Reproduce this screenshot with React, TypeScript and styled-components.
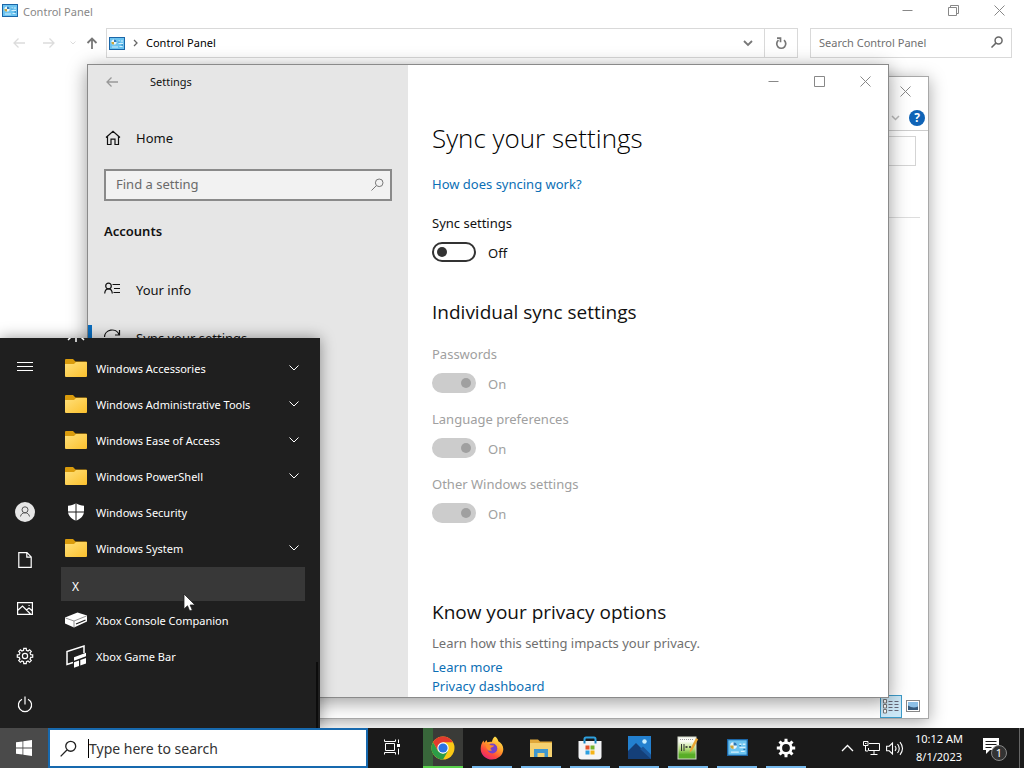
import React from "react";
import styled, { createGlobalStyle, css } from "styled-components";

const sans = `"Noto Sans", "Open Sans", "Segoe UI", sans-serif`;
const headingFont = `"Open Sans", "Noto Sans", "Segoe UI", sans-serif`;

const GlobalStyle = createGlobalStyle`
  *, *::before, *::after { box-sizing: border-box; }
  body { margin: 0; font-family: ${sans}; font-size: 13px; line-height: 20px; color: #111; }
  h1, h2, h3, p, ul { margin: 0; padding: 0; }
  ul { list-style: none; }
  button { margin: 0; padding: 0; border: 0; background: none; font: inherit; color: inherit; text-align: left; }
  a { color: inherit; text-decoration: none; }
  svg { display: block; flex: none; }
`;

/* ---------- desktop ---------- */

const Desktop = styled.div`
  display: flex;
  flex-direction: column;
  min-height: 100vh;
  overflow: hidden;
`;

const Workspace = styled.main`
  position: relative;
  flex: 1;
  background: #fff;
  overflow: hidden;
`;

const CaptionButtons = styled.div`
  display: flex;
  margin-left: auto;
`;

const CaptionButton = styled.button`
  display: grid;
  place-items: center;
  width: 46px;
  height: 100%;
  color: #888;
`;

/* ---------- control panel window ---------- */

const ControlTitleBar = styled.header`
  display: flex;
  align-items: center;
  gap: 5px;
  height: 20px;
  padding: 0 2px;
  font-size: 11px;
  color: #888;
`;

const TitleText = styled.span`
  line-height: 20px;
  padding-top: 4px;
`;

const AddressRow = styled.div`
  display: flex;
  align-items: center;
  height: 30px;
  margin: 8px 12px 0 8px;
`;

const HistoryButtons = styled.nav`
  display: flex;
  align-items: center;
  width: 98px;
  color: #dcdcdc;
`;

const HistoryButton = styled.button<{ $width: number; $tone?: string }>`
  display: grid;
  place-items: center;
  width: ${(p) => p.$width}px;
  height: 28px;
  color: ${(p) => p.$tone ?? "inherit"};
`;

const AddressBox = styled.div`
  display: flex;
  align-items: center;
  flex: 1;
  height: 30px;
  padding-left: 2px;
  border: 1px solid #d9d9d9;
  font-size: 11px;
  color: #000;
`;

const Crumb = styled.span`
  display: flex;
  align-items: center;
  gap: 8px;
  flex: 1;
`;

const CrumbArrow = styled.span`
  color: #666;
`;

const AddressButton = styled.button<{ $divided?: boolean }>`
  display: grid;
  place-items: center;
  width: 33px;
  height: 28px;
  color: #777;
  ${(p) => p.$divided && css`border-left: 1px solid #d9d9d9;`}
`;

const SearchBox = styled.label`
  display: flex;
  align-items: center;
  width: 202px;
  height: 30px;
  margin-left: 12px;
  padding: 0 8px 2px;
  border: 1px solid #d9d9d9;
  color: #666;
`;

const PlainInput = styled.input<{ $size: number; $tone: string }>`
  flex: 1;
  min-width: 0;
  height: 20px;
  padding: 0;
  border: 0;
  outline: 0;
  background: transparent;
  font-family: ${sans};
  font-size: ${(p) => p.$size}px;
  color: #111;
  &::placeholder { color: ${(p) => p.$tone}; opacity: 1; }
`;

/* ---------- background explorer window ---------- */

const ExplorerWindow = styled.section`
  position: absolute;
  inset: 76px 95px 9px 200px;
  display: flex;
  flex-direction: column;
  background: #fff;
  border: 1px solid #a8a8a8;
  box-shadow: 0 3px 16px rgba(0, 0, 0, 0.35);
`;

const ExplorerTitle = styled.header`
  display: flex;
  height: 28px;
`;

const ExplorerRibbon = styled.div`
  display: flex;
  align-items: center;
  justify-content: flex-end;
  gap: 9px;
  height: 26px;
  padding-right: 3px;
  border-bottom: 1px solid #ccc;
  color: #bbb;
`;

const HelpButton = styled.button`
  width: 16px;
  height: 16px;
  border-radius: 50%;
  background: #0f63b6;
  color: #fff;
  font-size: 12px;
  line-height: 16px;
  font-weight: 700;
  text-align: center;
`;

const ExplorerField = styled.div`
  height: 30px;
  margin: 5px 12px 0;
  border: 1px solid #d4d4d4;
`;

const ExplorerHeader = styled.div`
  height: 52px;
  margin: 0 8px;
  border-bottom: 1px solid #ddd;
`;

const ExplorerStatus = styled.footer`
  display: flex;
  align-items: center;
  justify-content: flex-end;
  height: 24px;
  margin-top: auto;
  padding-right: 4px;
`;

const ViewButton = styled.button<{ $selected?: boolean }>`
  display: grid;
  place-items: center;
  width: 22px;
  height: 23px;
  ${(p) => p.$selected && css`
    background: #cce8f7;
    border: 1px solid #3c9bc9;
  `}
`;

/* ---------- settings window ---------- */

const SettingsWindow = styled.section`
  position: absolute;
  inset: 64px 135px 30px 87px;
  display: flex;
  border: 1px solid #8a8a8a;
  background: #fff;
  box-shadow: 0 4px 18px rgba(0, 0, 0, 0.4);
  overflow: hidden;
`;

const NavPane = styled.aside`
  width: 320px;
  background: #e6e6e6;
`;

const NavTitleBar = styled.header`
  display: flex;
  align-items: center;
  height: 34px;
  padding-left: 17px;
  font-size: 11px;
`;

const BackButton = styled.button`
  display: grid;
  place-items: center;
  width: 14px;
  height: 28px;
  margin-right: 31px;
  color: #999;
`;

const NavLink = styled.a<{ $current?: boolean }>`
  display: flex;
  align-items: center;
  gap: 14px;
  height: 48px;
  padding-left: 16px;
  border-left: 0 solid #0a6cbd;
  ${(p) => p.$current && css`
    height: 26px;
    margin: 11px 0;
    padding-left: 12px;
    border-left-width: 4px;
  `}
`;

const NavTop = styled.div`
  padding-top: 15px;
`;

const FindBox = styled.label`
  display: flex;
  align-items: center;
  height: 32px;
  margin: 7px 16px 0;
  padding: 0 6px 2px 10px;
  border: 2px solid #8a8a8a;
  background: #f2f2f2;
  color: #777;
`;

const NavHeading = styled.h2`
  margin: 20px 16px 25px;
  font-size: 13px;
  font-weight: 600;
  line-height: 20px;
`;

const ContentPane = styled.div`
  flex: 1;
  min-width: 0;
`;

const ContentTitleBar = styled.header`
  display: flex;
  height: 33px;
`;

const ContentBody = styled.div`
  padding: 22px 24px 0;
`;

const PageTitle = styled.h1`
  font-family: ${headingFont};
  font-size: 26px;
  font-weight: 350;
  line-height: 36px;
  color: #000;
`;

const SectionTitle = styled.h2`
  margin: 36px 0 18px;
  font-family: ${headingFont};
  font-size: 19px;
  font-weight: 400;
  line-height: 28px;
  color: #111;
`;

const PrivacySection = styled.section`
  padding-top: 39px;
  ${SectionTitle} { margin-bottom: 7px; }
`;

const TextLink = styled.a`
  display: block;
  width: fit-content;
  line-height: 19px;
  color: #0c6fb5;
`;

const HelpLink = styled(TextLink)`
  margin: 19px 0;
`;

const Muted = styled.p`
  margin-bottom: 5px;
  color: #707070;
`;

const Setting = styled.div<{ $off?: boolean }>`
  display: flex;
  flex-direction: column;
  gap: 9px;
  color: ${(p) => (p.$off ? "#a0a0a0" : "#111")};
  & + & { margin-top: 16px; }
`;

const SwitchRow = styled.div`
  display: flex;
  gap: 12px;
  height: 20px;
  line-height: 22px;
`;

const Switch = styled.input`
  appearance: none;
  display: flex;
  align-items: center;
  width: 44px;
  height: 20px;
  margin: 0;
  padding: 0 3px;
  border: 2px solid #333;
  border-radius: 10px;
  background: #fff;
  &::before {
    content: "";
    width: 10px;
    height: 10px;
    border-radius: 50%;
    background: #333;
  }
  &:checked { justify-content: flex-end; }
  &:disabled { background: #ccc; border-color: #ccc; }
  &:disabled::before { background: #a0a0a0; }
`;

/* ---------- start menu ---------- */

const StartMenu = styled.aside`
  position: absolute;
  left: 0;
  bottom: 0;
  display: flex;
  width: 320px;
  height: 390px;
  background: #1f1f1f;
  color: #fff;
  box-shadow: 0 0 14px rgba(0, 0, 0, 0.4);
`;

const Rail = styled.nav`
  display: flex;
  flex-direction: column;
  width: 61px;
  padding-top: 5px;
`;

const RailButton = styled.button`
  display: grid;
  place-items: center;
  width: 50px;
  height: 48px;
  &:first-child { margin-bottom: auto; }
`;

const AppList = styled.ul`
  display: flex;
  flex-direction: column;
  justify-content: flex-end;
  width: 244px;
  height: 390px;
  padding-bottom: 54px;
  overflow: hidden;
  font-size: 11px;
`;

const AppItem = styled.button`
  display: flex;
  align-items: center;
  gap: 8px;
  width: 100%;
  height: 36px;
  padding: 0 6px 0 3px;
`;

const AppIcon = styled.span`
  display: grid;
  place-items: center;
  width: 24px;
  height: 24px;
`;

const AppName = styled.span`
  flex: 1;
  padding-top: 2px;
`;

const LetterHeader = styled.button`
  display: block;
  width: 100%;
  height: 34px;
  margin: 1px 0;
  padding: 5px 11px 0;
  background: #383838;
  font-size: 12px;
`;

const ScrollThumb = styled.span`
  align-self: flex-end;
  width: 2px;
  height: 66px;
  margin-left: 11px;
  background: #0c0c0c;
`;

const Pointer = styled.svg`
  position: absolute;
  left: 183px;
  bottom: 115px;
`;

/* ---------- taskbar ---------- */

const Taskbar = styled.footer`
  display: flex;
  height: 40px;
  background: #1a1a1a;
  color: #fff;
`;

const StartButton = styled.button`
  display: grid;
  place-items: center;
  width: 48px;
  background: #4a4a4a;
`;

const TaskSearch = styled.label`
  display: flex;
  align-items: center;
  width: 320px;
  padding-left: 10px;
  border: 2px solid #1769ae;
  background: #fff;
  color: #222;
`;

const Caret = styled.span`
  width: 1px;
  height: 19px;
  margin-left: 11px;
  background: #000;
`;

const TaskButton = styled.button<{ $line?: string; $active?: boolean }>`
  display: grid;
  place-items: center;
  width: 40px;
  padding-top: 1px;
  border-bottom: 2px solid ${(p) => p.$line ?? "transparent"};
  ${(p) => p.$active && css`background: linear-gradient(90deg, #38663a 10px, #3a3b38 10px);`}
`;

const TaskButtons = styled.nav`
  display: flex;
  gap: 9px;
  margin-left: 6px;
`;

const Tray = styled.div`
  display: flex;
  align-items: center;
  margin-left: auto;
`;

const TrayButton = styled.button`
  display: grid;
  place-items: center;
  width: 24px;
  height: 40px;
`;

const Clock = styled.button`
  width: 64px;
  font-size: 11px;
  line-height: 18px;
  text-align: center;
`;

const NoticeButton = styled(TrayButton)`
  width: 48px;
`;

const ShowDesktop = styled.button`
  width: 5px;
  height: 40px;
  border-left: 1px solid #666;
`;

/* ---------- drawings ---------- */

type StrokeProps = { w: number; h: number; d: string; sw?: number };
const Stroke = ({ w, h, d, sw = 1 }: StrokeProps) => (
  <svg width={w} height={h} viewBox={`0 0 ${w} ${h}`} fill="none" stroke="currentColor" strokeWidth={sw} aria-hidden="true">
    <path d={d} />
  </svg>
);

const MinimizeIcon = () => <Stroke w={11} h={11} d="M0.5 5.5h10" />;
const MaximizeIcon = () => <Stroke w={11} h={11} d="M0.5 0.5h10v10h-10z" />;
const RestoreIcon = () => <Stroke w={11} h={11} d="M0.5 2.5h8v8h-8zM2.5 2.5v-2h8v8h-2" />;
const CloseIcon = () => <Stroke w={11} h={11} d="M0.5 0.5l10 10M10.5 0.5l-10 10" />;
const ArrowLeft = () => <Stroke w={12} h={12} sw={1.3} d="M12 6H1M5.5 1.5L1 6l4.500 4.500" />;
const ArrowRight = () => <Stroke w={12} h={12} sw={1.3} d="M0 6h11M6.500 1.500L11 6l-4.500 4.500" />;
const SearchGlyph = ({ size = 13, sw = 1 }: { size?: number; sw?: number }) => (
  <svg width={size} height={size} viewBox="0 0 13 13" fill="none" stroke="currentColor" strokeWidth={sw} aria-hidden="true">
    <circle cx="8.200" cy="4.800" r="3.800" />
    <path d="M5.300 7.700L0.500 12.500" />
  </svg>
);

const PanelIcon = ({ w = 16, h = 13 }: { w?: number; h?: number }) => (
  <svg width={w} height={h} viewBox="0 0 16 13" aria-hidden="true">
    <rect x="0.500" y="0.500" width="15" height="12" fill="#6cc4f0" stroke="#1b66a8" />
    <circle cx="5" cy="5" r="2.600" fill="#e9f6fd" />
    <path d="M5 5V2.400A2.600 2.600 0 0 1 7.600 5z" fill="#2b78b8" />
    <path d="M5 5H2.400A2.600 2.600 0 0 0 5 7.600z" fill="#c9a53c" />
    <path d="M9.500 4h1.500M12 4h2M9.500 6.500h4.500M3 10h6M10.500 9.500h3" stroke="#d4f0fd" />
    <path d="M9.500 5h1M12.500 8h1.500" stroke="#1f6fae" />
  </svg>
);

const FolderIcon = () => (
  <svg width="24" height="20" viewBox="0 0 24 20" aria-hidden="true">
    <defs>
      <linearGradient id="folder" x1="0" y1="0" x2="1" y2="1">
        <stop offset="0" stopColor="#ffe07a" />
        <stop offset="1" stopColor="#fbc02d" />
      </linearGradient>
    </defs>
    <path d="M1 2q0-1 1-1h7l2.500 2.500H22q1 0 1 1V10H1z" fill="#d99b0c" />
    <path d="M1 6h9l2-2h10.500q.5 0 .5 1v13q0 1-1 1H2q-1 0-1-1z" fill="url(#folder)" />
  </svg>
);

const ShieldIcon = () => (
  <svg width="18" height="18" viewBox="0 0 18 18" aria-hidden="true">
    <path d="M9 0.300C6.500 2 3.800 2.700 1 2.700V8c0 4.600 3 7.800 8 9.800 5-2 8-5.200 8-9.800V2.700C14.200 2.700 11.500 2 9 0.300z" fill="#fff" />
    <path d="M9 0v18M0 9h18" stroke="#1f1f1f" strokeWidth="1" />
  </svg>
);

const SunIcon = () => (
  <svg width="20" height="20" viewBox="0 0 20 20" fill="none" stroke="#fff" strokeWidth="1.500" aria-hidden="true">
    <circle cx="10" cy="10" r="4" />
    <path d="M10 0v4M10 16v4M0 10h4M16 10h4M3 3l2.500 2.500M14.500 14.500L18 18M17 3l-2.500 2.500M5.500 14.500L2 18" />
  </svg>
);

const ConsoleIcon = () => (
  <svg width="24" height="18" viewBox="0 0 24 18" aria-hidden="true">
    <path d="M1 6.500L13.500 1.500l9.500 3v6L10 16.500 1 12.500z" fill="#fff" />
    <path d="M1.500 7L10 10l12.500-5M10 10v6" stroke="#777" strokeWidth="0.800" fill="none" />
    <path d="M12 13l9.500-4" stroke="#1f1f1f" strokeWidth="1.300" />
  </svg>
);

const GameBarIcon = () => (
  <svg width="22" height="24" viewBox="0 0 22 24" aria-hidden="true">
    <path d="M19 9V2L2 7.500v13l6-2" fill="none" stroke="#fff" strokeWidth="1.500" />
    <path d="M9 13.200L21 8.700v3.500L9 16.700zM9 18.300l5-1.800v5.500l-5 1.800zM15.300 15.900l5.700-2v5.500l-5.700 2z" fill="#fff" />
  </svg>
);

const HomeIcon = () => (
  <svg width="18" height="16" viewBox="0 0 18 16" fill="none" stroke="currentColor" strokeWidth="1.200" aria-hidden="true">
    <path d="M2 7.500L9 1.200l7 6.300M3.500 6.500v8h3.500V9.200h4V14.500h3.500v-8" />
  </svg>
);
const InfoIcon = () => (
  <svg width="18" height="18" viewBox="0 0 18 18" fill="none" stroke="currentColor" strokeWidth="1.200" aria-hidden="true">
    <circle cx="4.500" cy="5" r="2.800" />
    <path d="M0.700 12.500C0.900 9.500 2.500 7.800 4.500 7.800s3.600 1.700 3.800 4.700M8.500 3.500h7.500M10 7.500h6M9.500 11.500h6.500" />
  </svg>
);
const SyncIcon = () => <Stroke w={18} h={18} sw={1.200} d="M0.500 8A7.500 7 0 0 1 15 5.500M15.500 1V6H11M15.500 9.500A7.500 7.500 0 0 1 1.500 11M1 16V11.500H5.500" />;

const HamburgerIcon = () => <Stroke w={16} h={12} d="M0 1.500h16M0 5.500h16M0 9.500h16" />;
const UserIcon = () => (
  <svg width="20" height="20" viewBox="0 0 20 20" aria-hidden="true">
    <circle cx="10" cy="10" r="10" fill="#e6e6e6" />
    <g fill="none" stroke="#555"><circle cx="10" cy="7.800" r="3" /><path d="M5.500 14.500c.5-2.500 2.200-3.700 4.500-3.700s4 1.200 4.500 3.700" /></g>
  </svg>
);
const DocumentIcon = () => <Stroke w={14} h={16} sw={1.200} d="M0.800 0.700H9l4.200 4.200v10.400H0.800zM8.800 0.800V5.200h4.200" />;
const PictureIcon = () => (
  <svg width="16" height="13" viewBox="0 0 16 13" fill="none" stroke="currentColor" strokeWidth="1.200" aria-hidden="true">
    <path d="M0.600 0.600h14.800v11.800H0.600zM0.600 8.500L5.500 4l8 8M9.500 8l2.500-2 3.400 3" />
    <path d="M11.500 3.500h1.200" />
  </svg>
);

const gearPath = (n: number, c: number, outer: number, inner: number) => {
  const pts: string[] = [];
  for (let i = 0; i < n; i++) {
    const a = (i * 2 * Math.PI) / n;
    const s = Math.PI / n;
    [[-0.62, inner], [-0.4, outer], [0.4, outer], [0.62, inner]].forEach(([o, r]) => {
      pts.push(`${(c + r * Math.sin(a + o * s)).toFixed(2)} ${(c - r * Math.cos(a + o * s)).toFixed(2)}`);
    });
  }
  return `M${pts.join("L")}Z`;
};

const GearIcon = () => (
  <svg width="18" height="18" viewBox="0 0 18 18" fill="none" stroke="currentColor" strokeWidth="1.200" aria-hidden="true">
    <path d={gearPath(8, 9, 7.8, 5.9)} />
    <circle cx="9" cy="9" r="2.600" />
  </svg>
);
const GearSolid = () => (
  <svg width="20" height="20" viewBox="0 0 20 20" aria-hidden="true">
    <path d={gearPath(8, 10, 9.3, 6.6)} fill="#fff" />
    <circle cx="10" cy="10" r="3.900" fill="#1a1a1a" />
  </svg>
);
const PowerIcon = () => <Stroke w={16} h={17} sw={1.200} d="M8 0.500v8M5 3.200a6.600 6.600 0 1 0 6 0" />;

const WindowsLogo = () => (
  <svg width="16" height="16" viewBox="0 0 16 16" fill="#fff" aria-hidden="true">
    <path d="M0 2.300l6.500-.9v6.200H0zM7.300 1.300L16 0v7.600H7.300zM0 8.400h6.500v6.200L0 13.700zM7.300 8.400H16V16l-8.700-1.300z" />
  </svg>
);

const TaskViewIcon = () => (
  <svg width="20" height="17" viewBox="0 0 20 17" fill="none" stroke="#fff" aria-hidden="true">
    <path d="M1.500 4.500h9v7h-9zM0.500 0.500v2h11v-2M0.500 15.500v-2h11v2" />
    <path d="M14.500 0.500v3.500M14.500 9.500v6" />
    <rect x="13" y="5" width="3" height="3" fill="#fff" stroke="none" />
  </svg>
);

const ChromeIcon = () => (
  <svg width="24" height="24" viewBox="0 0 24 24" aria-hidden="true">
    <circle cx="12" cy="12" r="11.500" fill="#fbc916" />
    <path d="M2.040 6.250A11.500 11.500 0 0 1 21.960 6.250H12L7 15z" fill="#e33b2e" />
    <path d="M2.040 6.250L7 14.900 12 17.800 17 14.900 12 23.500A11.500 11.500 0 0 1 2.040 6.250z" fill="#2c9c48" />
    <circle cx="12" cy="12" r="5.700" fill="#fff" />
    <circle cx="12" cy="12" r="4.600" fill="#2b74e4" />
  </svg>
);

const FirefoxIcon = () => (
  <svg width="24" height="24" viewBox="0 0 24 24" aria-hidden="true">
    <defs>
      <linearGradient id="fox" x1="0.800" y1="0.100" x2="0.250" y2="1">
        <stop offset="0" stopColor="#ffe14a" />
        <stop offset="0.400" stopColor="#ff9a2a" />
        <stop offset="0.700" stopColor="#ff4a3c" />
        <stop offset="1" stopColor="#e3227a" />
      </linearGradient>
    </defs>
    <path d="M15 0.500c2 1.300 3 3 3.300 4.700 3 1.600 5 4.500 5 8A11.300 10.500 0 0 1 12 23.500 11.300 10.500 0 0 1 0.700 13c0-3.200.8-6 2.800-8.500l.8 2.200L6.500 4l.8 2.300c1.500-.6 2.800-.8 4.700-.5.3-2.300 1.300-4 3-5.300z" fill="url(#fox)" />
    <circle cx="12.300" cy="12.500" r="5" fill="#7542c9" />
    <path d="M5.500 9c1.700-1.300 4-.8 5.500.3l3 .2c-.2 1.500-2.500 1.500-3.300 2.500-.5 1 .2 2 1.300 2-1.200 1.500-4 1-5-1z" fill="#ff8a2a" />
    <path d="M14 6c2.800 1 4.200 3.500 4 6.500 1-1 1.300-3 .8-4.500" fill="#ffb62e" />
  </svg>
);

const ExplorerIcon = () => (
  <svg width="24" height="20" viewBox="0 0 24 20" aria-hidden="true">
    <path d="M1 1.500h8l2 2h12V19H1z" fill="#e0a83a" />
    <path d="M1 5h22v14H1z" fill="#f5d170" />
    <path d="M5 11h14v8h-3.500v-4h-7v4H5z" fill="#3f97cf" />
  </svg>
);

const StoreIcon = () => (
  <svg width="24" height="24" viewBox="0 0 24 24" aria-hidden="true">
    <path d="M6.500 7V3q0-1.500 1.500-1.500h8q1.500 0 1.500 1.500v4" fill="none" stroke="#2ea0dd" strokeWidth="2" />
    <path d="M0.500 5h23v15.500q0 3-3 3h-17q-3 0-3-3z" fill="#f3f4f6" />
    <path d="M7.500 9.500h4v4h-4z" fill="#e3512b" />
    <path d="M12.500 9.500h4v4h-4z" fill="#76b52c" />
    <path d="M7.500 14.500h4v4h-4z" fill="#2b9fe0" />
    <path d="M12.500 14.500h4v4h-4z" fill="#f5b417" />
    <path d="M6.500 5v2.500M17.500 5v2.500" stroke="#1480bf" strokeWidth="2" />
  </svg>
);

const PhotosIcon = () => (
  <svg width="23" height="23" viewBox="0 0 23 23" aria-hidden="true">
    <rect width="23" height="23" fill="#2380cf" />
    <path d="M0 15L8 7l15 15v1H0z" fill="#143f78" />
    <path d="M12 13l3-2.500 8 8V23z" fill="#1b579c" />
    <circle cx="16.500" cy="5.500" r="2.200" fill="#c9efff" />
  </svg>
);

const NotepadIcon = () => (
  <svg width="22" height="24" viewBox="0 0 22 24" aria-hidden="true">
    <defs>
      <linearGradient id="note" x1="0" y1="0" x2="0" y2="1">
        <stop offset="0.200" stopColor="#fafbf5" />
        <stop offset="0.550" stopColor="#b6dd7c" />
        <stop offset="0.800" stopColor="#58ad27" />
      </linearGradient>
    </defs>
    <rect x="1" y="1" width="18" height="22" fill="url(#note)" stroke="#d5dccb" />
    <path d="M3 3.500h14" stroke="#999" strokeDasharray="1 1" />
    <path d="M4.500 8v7M7 8v7" stroke="#333" />
    <path d="M8.500 11h2M12 11h2" stroke="#222" strokeWidth="1.500" />
    <path d="M12.500 16.500l1-4L19 2l2.200 1.300L15.500 14z" fill="#e9a634" />
  </svg>
);

const NetworkIcon = () => (
  <svg width="17" height="15" viewBox="0 0 17 15" fill="none" stroke="#fff" aria-hidden="true">
    <path d="M6 2.500h10.500v7H5.500V7M11 9.500v4M7.500 13.500h7" />
    <path d="M0.500 0.500h4.500v4H0.500zM2.500 4.500v5.500H5" />
    <path d="M2 2.500h1.500" />
  </svg>
);

const VolumeIcon = () => (
  <svg width="18" height="15" viewBox="0 0 18 15" fill="none" stroke="#fff" strokeWidth="1.100" aria-hidden="true">
    <path d="M0.600 5.200h2.600L6.500 2v11L3.200 9.800H0.600zM9 5q2 2.500 0 5M11.500 3q3.500 4.500 0 9M14 1.200q5 6.300 0 12.600" />
  </svg>
);

const NoticeIcon = () => (
  <svg width="26" height="26" viewBox="0 0 26 26" aria-hidden="true">
    <path d="M1 3h16v12H8l-4 4v-4H1z" fill="#fff" />
    <path d="M3.500 6.500h11M3.500 9.500h11M3.500 12.500h6" stroke="#1a1a1a" strokeWidth="1.200" />
    <circle cx="17" cy="18" r="7.500" fill="#333" stroke="#888" />
    <text x="17" y="22" fill="#fff" fontSize="11" textAnchor="middle" fontFamily="Noto Sans, sans-serif">1</text>
  </svg>
);

const DetailsIcon = () => (
  <svg width="18" height="15" viewBox="0 0 18 15" fill="none" aria-hidden="true">
    <path d="M1.500 0.500h3v3.500h-3zM1.500 5.500h3v3.500h-3zM1.500 10.500h3v3.500h-3z" fill="#fff" stroke="#777" />
    <path d="M6.500 2.500h10M6.500 5.500h10M6.500 8.500h10M6.500 11.500h10" stroke="#667" strokeDasharray="4 2" />
  </svg>
);
const ThumbIcon = () => (
  <svg width="14" height="12" viewBox="0 0 14 12" aria-hidden="true">
    <rect x="0.500" y="0.500" width="13" height="11" fill="#fff" stroke="#888" />
    <rect x="2" y="2" width="10" height="8" fill="#8dc0e6" />
    <path d="M2 5.500q5 3.500 10 1V10H2z" fill="#35597a" />
  </svg>
);

/* ---------- data ---------- */

const startItems = [
  { name: "Windows Accessories", Icon: FolderIcon, folder: true },
  { name: "Windows Administrative Tools", Icon: FolderIcon, folder: true },
  { name: "Windows Ease of Access", Icon: FolderIcon, folder: true },
  { name: "Windows PowerShell", Icon: FolderIcon, folder: true },
  { name: "Windows Security", Icon: ShieldIcon, folder: false },
  { name: "Windows System", Icon: FolderIcon, folder: true },
];

const xboxItems = [
  { name: "Xbox Console Companion", Icon: ConsoleIcon, folder: false },
  { name: "Xbox Game Bar", Icon: GameBarIcon, folder: false },
];

const railItems = [
  { name: "Expand", Icon: HamburgerIcon },
  { name: "Account", Icon: UserIcon },
  { name: "Documents", Icon: DocumentIcon },
  { name: "Pictures", Icon: PictureIcon },
  { name: "Settings", Icon: GearIcon },
  { name: "Power", Icon: PowerIcon },
];

const blue = "#76b9ed";
const taskItems = [
  { name: "Google Chrome", Icon: ChromeIcon, line: "#5ad24c", active: true },
  { name: "Firefox", Icon: FirefoxIcon, line: blue },
  { name: "File Explorer", Icon: ExplorerIcon, line: blue },
  { name: "Microsoft Store", Icon: StoreIcon, line: blue },
  { name: "Photos", Icon: PhotosIcon, line: blue },
  { name: "Notepad++", Icon: NotepadIcon, line: blue },
  { name: "Control Panel", Icon: () => <PanelIcon w={21} h={17} />, line: blue },
  { name: "Settings", Icon: GearSolid, line: blue },
];

const syncOptions = [
  { id: "passwords", label: "Passwords" },
  { id: "language", label: "Language preferences" },
  { id: "other", label: "Other Windows settings" },
];

/* ---------- pieces ---------- */

const StartEntry = ({ name, Icon, folder }: (typeof startItems)[number]) => (
  <li>
    <AppItem type="button">
      <AppIcon><Icon /></AppIcon>
      <AppName>{name}</AppName>
      {folder && <Stroke w={10} h={6} d="M0.500 0.500L5 5l4.500-4.500" />}
    </AppItem>
  </li>
);

const Toggle = ({ id, label, on, disabled }: { id: string; label: string; on?: boolean; disabled?: boolean }) => (
  <Setting $off={disabled}>
    <label htmlFor={id}>{label}</label>
    <SwitchRow>
      <Switch id={id} type="checkbox" role="switch" defaultChecked={on} disabled={disabled} />
      <span>{on ? "On" : "Off"}</span>
    </SwitchRow>
  </Setting>
);

const ControlPanel = () => (
  <>
    <ControlTitleBar>
      <PanelIcon />
      <TitleText>Control Panel</TitleText>
      <CaptionButtons>
        <CaptionButton type="button" aria-label="Minimize"><MinimizeIcon /></CaptionButton>
        <CaptionButton type="button" aria-label="Restore"><RestoreIcon /></CaptionButton>
        <CaptionButton type="button" aria-label="Close"><CloseIcon /></CaptionButton>
      </CaptionButtons>
    </ControlTitleBar>
    <AddressRow>
      <HistoryButtons aria-label="History">
        <HistoryButton type="button" $width={22} aria-label="Back"><ArrowLeft /></HistoryButton>
        <HistoryButton type="button" $width={38} aria-label="Forward"><ArrowRight /></HistoryButton>
        <HistoryButton type="button" $width={10} aria-label="Recent"><Stroke w={6} h={4} d="M0.500 0.500L3 3l2.500-2.500" /></HistoryButton>
        <HistoryButton type="button" $width={28} $tone="#777" aria-label="Up"><Stroke w={12} h={12} sw={1.800} d="M6 12V1.500M1.500 6L6 1.500 10.500 6" /></HistoryButton>
      </HistoryButtons>
      <AddressBox>
        <Crumb>
          <PanelIcon />
          <CrumbArrow><Stroke w={5} h={8} sw={1.300} d="M1 1l3 3-3 3" /></CrumbArrow>
          <span>Control Panel</span>
        </Crumb>
        <AddressButton type="button" aria-label="Previous locations"><Stroke w={10} h={7} sw={1.800} d="M1 1l4 4 4-4" /></AddressButton>
        <AddressButton type="button" $divided aria-label="Refresh">
          <svg width="12" height="13" viewBox="0 0 12 13" fill="none" stroke="currentColor" strokeWidth="1.700" aria-hidden="true">
            <path d="M9 3.200A4.500 4.500 0 1 1 3.500 3.200M2 1.200h3.500v4" />
          </svg>
        </AddressButton>
      </AddressBox>
      <SearchBox>
        <PlainInput $size={11} $tone="#707070" placeholder="Search Control Panel" aria-label="Search Control Panel" />
        <SearchGlyph size={12} sw={1.600} />
      </SearchBox>
    </AddressRow>
  </>
);

const Explorer = () => (
  <ExplorerWindow aria-label="File window">
    <ExplorerTitle>
      <CaptionButtons>
        <CaptionButton type="button" aria-label="Close"><CloseIcon /></CaptionButton>
      </CaptionButtons>
    </ExplorerTitle>
    <ExplorerRibbon>
      <Stroke w={9} h={6} sw={1.500} d="M1 1l3.500 3.500L8 1" />
      <HelpButton type="button">?</HelpButton>
    </ExplorerRibbon>
    <ExplorerField />
    <ExplorerHeader />
    <ExplorerStatus>
      <ViewButton type="button" $selected aria-label="Details"><DetailsIcon /></ViewButton>
      <ViewButton type="button" aria-label="Large icons"><ThumbIcon /></ViewButton>
    </ExplorerStatus>
  </ExplorerWindow>
);

const Settings = () => (
  <SettingsWindow aria-label="Settings">
    <NavPane>
      <NavTitleBar>
        <BackButton type="button" aria-label="Back"><ArrowLeft /></BackButton>
        <span>Settings</span>
      </NavTitleBar>
      <NavTop>
        <NavLink href="#home"><HomeIcon /><span>Home</span></NavLink>
      </NavTop>
      <FindBox>
        <PlainInput $size={13} $tone="#6a6a6a" placeholder="Find a setting" aria-label="Find a setting" />
        <SearchGlyph />
      </FindBox>
      <NavHeading>Accounts</NavHeading>
      <NavLink href="#info"><InfoIcon /><span>Your info</span></NavLink>
      <NavLink href="#sync" $current><SyncIcon /><span>Sync your settings</span></NavLink>
    </NavPane>
    <ContentPane>
      <ContentTitleBar>
        <CaptionButtons>
          <CaptionButton type="button" aria-label="Minimize"><MinimizeIcon /></CaptionButton>
          <CaptionButton type="button" aria-label="Maximize"><MaximizeIcon /></CaptionButton>
          <CaptionButton type="button" aria-label="Close"><CloseIcon /></CaptionButton>
        </CaptionButtons>
      </ContentTitleBar>
      <ContentBody>
        <PageTitle>Sync your settings</PageTitle>
        <HelpLink href="#help">How does syncing work?</HelpLink>
        <Toggle id="sync-all" label="Sync settings" />
        <SectionTitle>Individual sync settings</SectionTitle>
        {syncOptions.map((o) => (
          <Toggle key={o.id} id={o.id} label={o.label} on disabled />
        ))}
        <PrivacySection>
          <SectionTitle>Know your privacy options</SectionTitle>
          <Muted>Learn how this setting impacts your privacy.</Muted>
          <TextLink href="#learn">Learn more</TextLink>
          <TextLink href="#privacy">Privacy dashboard</TextLink>
        </PrivacySection>
      </ContentBody>
    </ContentPane>
  </SettingsWindow>
);

const Start = () => (
  <StartMenu aria-label="Start">
    <Rail>
      {railItems.map(({ name, Icon }) => (
        <RailButton key={name} type="button" aria-label={name}><Icon /></RailButton>
      ))}
    </Rail>
    <AppList>
      <li><AppItem type="button" aria-label="Weather"><AppIcon><SunIcon /></AppIcon></AppItem></li>
      {startItems.map((item) => <StartEntry key={item.name} {...item} />)}
      <li><LetterHeader type="button">X</LetterHeader></li>
      {xboxItems.map((item) => <StartEntry key={item.name} {...item} />)}
    </AppList>
    <ScrollThumb />
  </StartMenu>
);

export default function App() {
  return (
    <Desktop>
      <GlobalStyle />
      <Workspace>
        <ControlPanel />
        <Explorer />
        <Settings />
        <Start />
        <Pointer width="13" height="20" viewBox="0 0 13 20" aria-hidden="true">
          <path d="M1 1v15l3.500-3.200L6.700 18l2.600-1.100L7.100 12H12z" fill="#fff" stroke="#222" strokeWidth="0.800" />
        </Pointer>
      </Workspace>
      <Taskbar>
        <StartButton type="button" aria-label="Start"><WindowsLogo /></StartButton>
        <TaskSearch>
          <SearchGlyph size={17} />
          <Caret />
          <PlainInput $size={14} $tone="#333" placeholder="Type here to search" aria-label="Type here to search" />
        </TaskSearch>
        <TaskButtons aria-label="Apps">
          <TaskButton type="button" aria-label="Task View"><TaskViewIcon /></TaskButton>
          {taskItems.map(({ name, Icon, line, active }) => (
            <TaskButton key={name} type="button" aria-label={name} $line={line} $active={active}><Icon /></TaskButton>
          ))}
        </TaskButtons>
        <Tray>
          <TrayButton type="button" aria-label="Show hidden icons"><Stroke w={13} h={8} sw={1.300} d="M1 7l5.500-5.500L12 7" /></TrayButton>
          <TrayButton type="button" aria-label="Network"><NetworkIcon /></TrayButton>
          <TrayButton type="button" aria-label="Volume"><VolumeIcon /></TrayButton>
          <Clock type="button">10:12 AM<br />8/1/2023</Clock>
          <NoticeButton type="button" aria-label="Notifications"><NoticeIcon /></NoticeButton>
          <ShowDesktop type="button" aria-label="Show desktop" />
        </Tray>
      </Taskbar>
    </Desktop>
  );
}
